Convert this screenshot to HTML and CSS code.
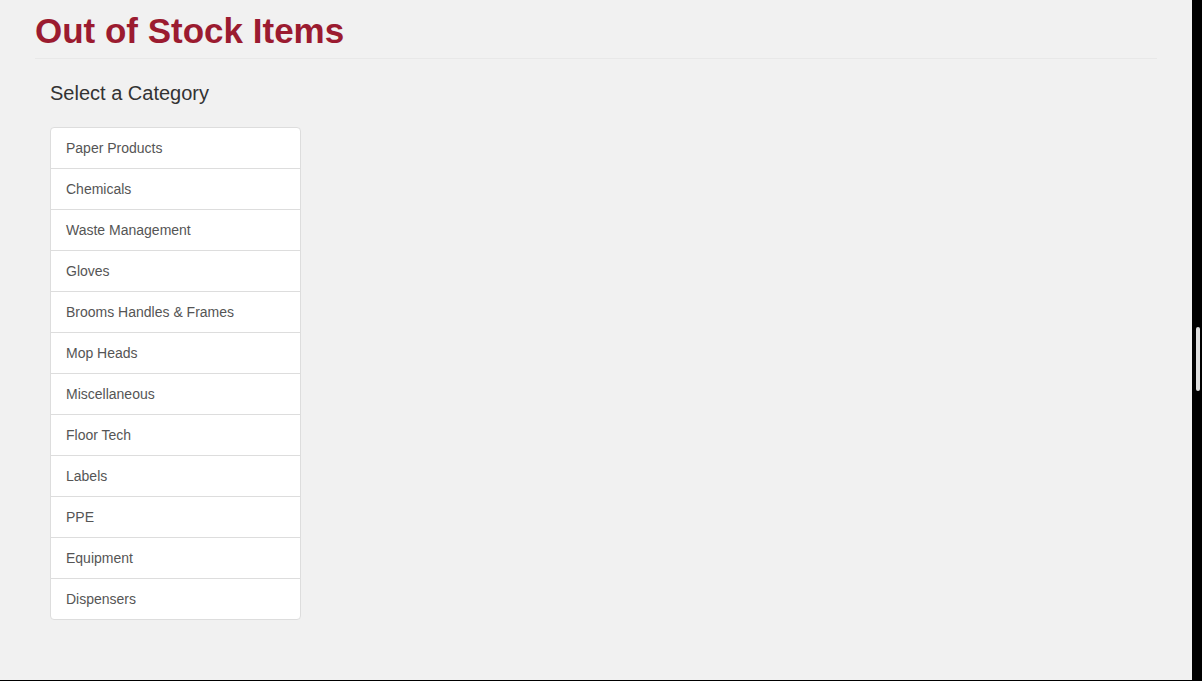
FILE: index.html
```html
<!DOCTYPE html>
<html>
<head>
<meta charset="utf-8">
<link rel="stylesheet" href="styles.css">
</head>
<body>
<div class="frame">
  <div class="page">
    <div class="container">
      <h1 class="title">Out of Stock Items</h1>
      <div class="content">
        <h3 class="subtitle">Select a Category</h3>
        <div class="list-group">
          <a class="list-item">Paper Products</a>
          <a class="list-item">Chemicals</a>
          <a class="list-item">Waste Management</a>
          <a class="list-item">Gloves</a>
          <a class="list-item">Brooms Handles &amp; Frames</a>
          <a class="list-item">Mop Heads</a>
          <a class="list-item">Miscellaneous</a>
          <a class="list-item">Floor Tech</a>
          <a class="list-item">Labels</a>
          <a class="list-item">PPE</a>
          <a class="list-item">Equipment</a>
          <a class="list-item">Dispensers</a>
        </div>
      </div>
    </div>
  </div>
  <div class="scrollbar"><div class="thumb"></div></div>
</div>
</body>
</html>
```

FILE: styles.css
```css
html, body {
  margin: 0;
  padding: 0;
  background: #000;
}
.frame {
  display: flex;
  width: 1202px;
  height: 681px;
  overflow: hidden;
  position: relative;
}
.page {
  width: 1192px;
  height: 680px;
  background: #f1f1f1;
  overflow: hidden;
  font-family: "Liberation Sans", Arial, sans-serif;
}
.container {
  padding: 0 35px;
}
.title {
  margin: 0;
  padding-top: 11px;
  padding-bottom: 7px;
  font-size: 35px;
  line-height: 40px;
  font-weight: bold;
  color: #9b1b30;
  border-bottom: 1px solid #e8e8e8;
}
.content {
  padding: 0 15px;
}
.subtitle {
  margin: 21px 0 21px;
  font-size: 20px;
  line-height: 26px;
  font-weight: normal;
  color: #333;
}
.list-group {
  width: 251px;
  display: flex;
  flex-direction: column;
}
.list-item {
  display: block;
  padding: 10px 15px;
  font-size: 14px;
  line-height: 20px;
  color: #555;
  background: #fff;
  border: 1px solid #ddd;
  margin-bottom: -1px;
}
.list-item:first-child {
  border-top-left-radius: 4px;
  border-top-right-radius: 4px;
}
.list-item:last-child {
  border-bottom-left-radius: 4px;
  border-bottom-right-radius: 4px;
  margin-bottom: 0;
}
.scrollbar {
  width: 10px;
  height: 681px;
  position: relative;
}
.thumb {
  position: absolute;
  left: 4px;
  top: 327px;
  width: 4px;
  height: 64px;
  background: #ddd;
  border-radius: 2px;
}
```
